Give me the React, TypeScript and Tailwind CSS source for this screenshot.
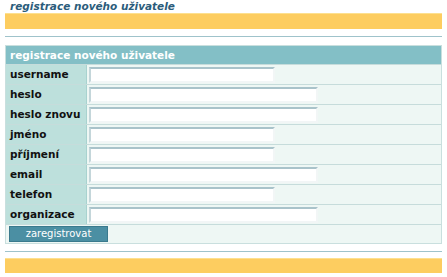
import React from "react";

const rows: { label: string; long: boolean }[] = [
  { label: "username", long: false },
  { label: "heslo", long: true },
  { label: "heslo znovu", long: true },
  { label: "jméno", long: false },
  { label: "příjmení", long: false },
  { label: "email", long: true },
  { label: "telefon", long: false },
  { label: "organizace", long: true },
];

export default function App() {
  return (
    <div
      className="w-[447px] h-[277px] bg-white overflow-hidden"
      style={{ fontFamily: '"DejaVu Sans", Verdana, sans-serif' }}
    >
      <div className="h-[13px] pl-[10px] text-[10.5px] leading-[13px] italic font-bold text-[#2b5c7b]">
        registrace nového uživatele
      </div>
      <div className="mx-[5px] h-[16px] bg-[#fdcd60] border-t border-[#fde08f]" />
      <div className="h-[7px]" />
      <div className="mx-[5px] h-px bg-[#9fc3cb]" />
      <div className="h-[8px]" />
      <div className="mx-[5px] border border-[#c9dfde] bg-[#eef7f4]">
        <div className="h-[18px] bg-[#83bfc6] text-white font-bold text-[10.5px] leading-[18px] pl-[4px]">
          registrace nového uživatele
        </div>
        {rows.map((r) => (
          <div key={r.label} className="flex h-[20px] border-t border-[#c6dcdb]">
            <div className="w-[81px] shrink-0 bg-[#bde0dc] border-r border-[#a8d2cf] pl-[4px] text-[10.5px] font-bold leading-[19px] text-[#111]">
              {r.label}
            </div>
            <div className="flex items-center pl-[2px]">
              <input
                className={`${r.long ? "w-[229px]" : "w-[186px]"} h-[16px] bg-white border-2 border-t-[#a9c3ca] border-l-[#c4d6da] border-b-[#f2f6f6] border-r-[#f2f6f6] outline-none`}
              />
            </div>
          </div>
        ))}
        <div className="flex items-center h-[19px] border-t border-[#c6dcdb] pl-[3px]">
          <button className="w-[99px] h-[16px] bg-[#4b8fa3] border border-[#3a7a8d] text-white text-[10px] leading-[14px]">
            zaregistrovat
          </button>
        </div>
      </div>
      <div className="h-[7px]" />
      <div className="mx-[5px] h-px bg-[#9fc3cb]" />
      <div className="h-[6px]" />
      <div className="mx-[5px] h-[15px] bg-[#fdcd60] border-t border-[#fde08f]" />
    </div>
  );
}
